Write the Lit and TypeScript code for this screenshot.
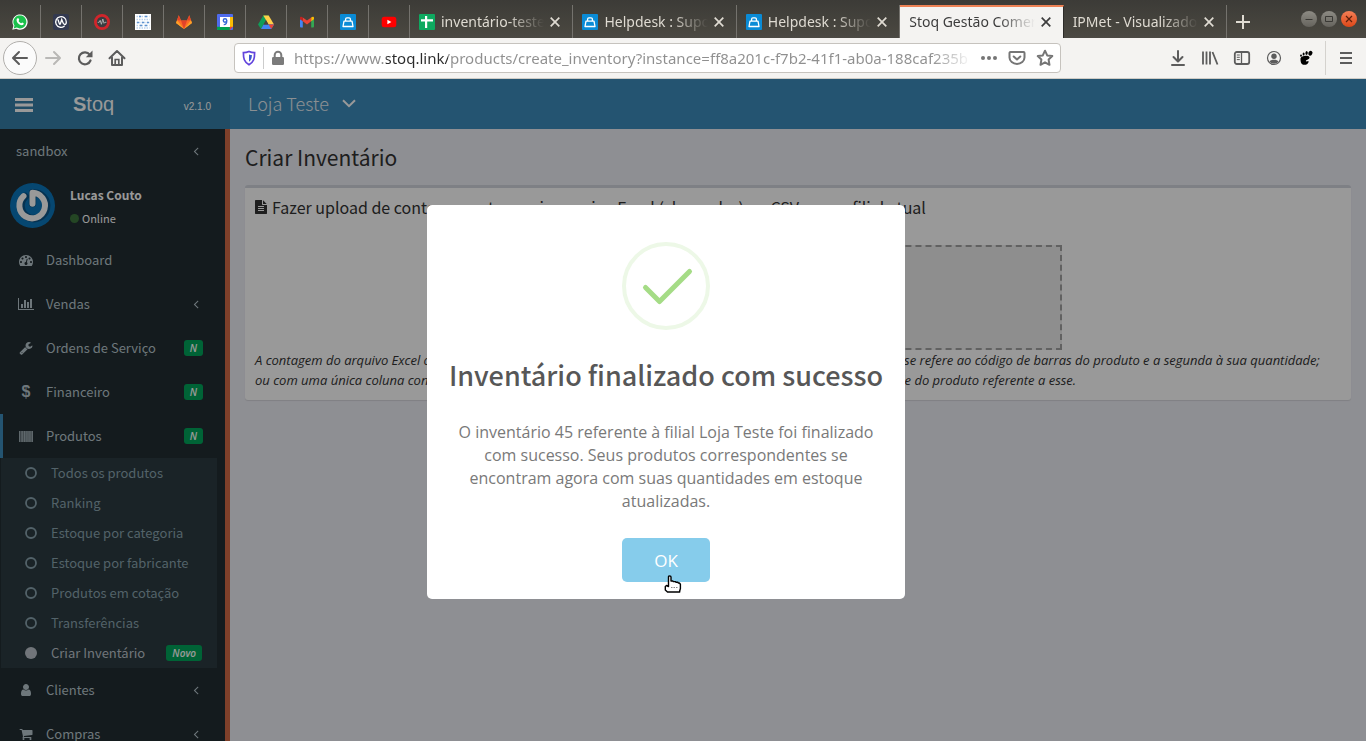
import { LitElement, html, css, svg, nothing } from "lit";
import { customElement } from "lit/decorators.js";
import { classMap } from "lit/directives/class-map.js";

const box = (view: string, w: number, h: number, body: unknown) =>
  html`<svg viewBox=${view} width=${w} height=${h} aria-hidden="true" style="display:block">${body}</svg>`;
const fa = (d: string, w = 14, h = 14, units = 1792) =>
  box(`0 0 ${units} 1792`, w, h, svg`<path fill="currentColor" d=${d} />`);

const FA = {
  angle: "M1203 544q0 13-10 23l-393 393 393 393q10 10 10 23t-10 23l-50 50q-10 10-23 10t-23-10l-466-466q-10-10-10-23t10-23l466-466q10-10 23-10t23 10l50 50q10 10 10 23z",
  user: "M1536 1399q0 109-62.5 187t-150.5 78h-854q-88 0-150.5-78t-62.5-187q0-85 8.5-160.5t31.5-152 58.5-131 94-89 134.5-34.5q131 128 313 128t313-128q76 0 134.5 34.5t94 89 58.5 131 31.5 152 8.5 160.5zm-256-887q0 159-112.5 271.5t-271.5 112.5-271.5-112.5-112.5-271.5 112.5-271.5 271.5-112.5 271.5 112.5 112.5 271.5z",
  cart: "M704 1536q0 52-38 90t-90 38-90-38-38-90 38-90 90-38 90 38 38 90zm896 0q0 52-38 90t-90 38-90-38-38-90 38-90 90-38 90 38 38 90zm128-1088v512q0 24-16.5 42.5t-40.5 21.5l-1044 122q13 60 13 70 0 16-24 64h920q26 0 45 19t19 45-19 45-45 19h-1024q-26 0-45-19t-19-45q0-11 8-31.5t16-36 21.5-40 15.5-29.5l-177-823h-204q-26 0-45-19t-19-45 19-45 45-19h256q16 0 28.5 6.5t19.5 15.5 13 24.5 8 26 5.5 29.5 4.5 26h1201q26 0 45 19t19 45z",
  wrench: "M448 1472q0-26-19-45t-45-19-45 19-19 45 19 45 45 19 45-19 19-45zm644-420l-682 682q-37 37-90 37-52 0-91-37l-106-108q-38-36-38-90 0-53 38-91l681-681q39 98 114.5 173.5t173.5 114.5zm634-435q0 39-23 106-47 134-164.5 217.5t-258.5 83.5q-185 0-316.5-131.5t-131.5-316.5 131.5-316.5 316.5-131.5q58 0 121.5 16.5t107.5 46.5q16 11 16 28t-16 28l-293 169v224l193 107q5-3 79-48.5t135.5-81 70.5-35.5q15 0 23.5 10t8.5 25z",
  dash: "M384 1152q0-53-37.5-90.5t-90.5-37.5-90.5 37.5-37.5 90.5 37.5 90.5 90.5 37.5 90.5-37.5 37.5-90.5zm192-448q0-53-37.5-90.5t-90.5-37.5-90.5 37.5-37.5 90.5 37.5 90.5 90.5 37.5 90.5-37.5 37.5-90.5zm428 481l101-382q6-26-7.5-48.5t-38.5-29.5-48 6.5-30 39.5l-101 382q-60 5-107 43.5t-63 98.5q-20 77 20 146t117 89 146-20 89-117q16-60-6-117t-72-91zm660-33q0-53-37.5-90.5t-90.5-37.5-90.5 37.5-37.5 90.5 37.5 90.5 90.5 37.5 90.5-37.5 37.5-90.5zm-640-640q0-53-37.5-90.5t-90.5-37.5-90.5 37.5-37.5 90.5 37.5 90.5 90.5 37.5 90.5-37.5 37.5-90.5zm448 192q0-53-37.5-90.5t-90.5-37.5-90.5 37.5-37.5 90.5 37.5 90.5 90.5 37.5 90.5-37.5 37.5-90.5zm320 448q0 261-141 483-19 29-54 29h-1402q-35 0-54-29-141-221-141-483 0-182 71-348t191-286 286-191 348-71 348 71 286 191 191 286 71 348z",
  bars: "M640 896v512h-256v-512h256zm384-512v1024h-256v-1024h256zm1024 1152v128h-2048v-1536h128v1408h1920zm-640-896v768h-256v-768h256zm384-384v1152h-256v-1152h256z",
  file: "M1596 476q14 14 28 36h-472v-472q22 14 36 28zm-476 164h544v1056q0 40-28 68t-68 28h-1344q-40 0-68-28t-28-68v-1600q0-40 28-68t68-28h800v544q0 40 28 68t68 28zm160 736v-64q0-14-9-23t-23-9h-704q-14 0-23 9t-9 23v64q0 14 9 23t23 9h704q14 0 23-9t9-23zm0-256v-64q0-14-9-23t-23-9h-704q-14 0-23 9t-9 23v64q0 14 9 23t23 9h704q14 0 23-9t9-23zm0-256v-64q0-14-9-23t-23-9h-704q-14 0-23 9t-9 23v64q0 14 9 23t23 9h704q14 0 23-9t9-23z",
};

const barcode = box("0 0 14 11", 14, 11, svg`<path fill="currentColor" opacity=".45" d="M0 0h14v11h-14z"/><path fill="currentColor" opacity=".7" d="M0 0h1v11h-1zM2 0h.6v11h-.6zM3.200 0h1v11h-1zM5 0h1.400v11h-1.400zM7 0h.7v11h-.7zM8.400 0h1.200v11h-1.200zM10.200 0h.7v11h-.7zM11.400 0h.6v11h-.6zM12.600 0h1.400v11h-1.400z" />`);

const fav = (body: unknown) => box("0 0 16 16", 16, 16, body);
const helpdesk = fav(svg`<rect width="16" height="16" rx="1" fill="#0a8bd6"/><path d="M4 7.200h8l1 5.300H3zM5.600 7V5.200a1.300 1.300 0 0 1 1.300-1.300h2.200a1.300 1.300 0 0 1 1.300 1.300V7" fill="none" stroke="#fff" stroke-width="1.300" stroke-linejoin="round"/>`);

const PINNED: [string, unknown][] = [
  ["WhatsApp", fav(svg`<path d="M.3 15.8l1.100-4A7.600 7.600 0 1 1 4.300 14.700z" fill="#fff"/><path d="M1.700 14.400l.8-2.800A6.500 6.500 0 1 1 4.700 13.600z" fill="#1bc04c"/><path d="M5.600 4.300c.4-.2.8-.1 1 .3l.6 1.200c.1.500-.6 1-.6 1.300.5 1 1.400 1.800 2.400 2.200.4 0 .8-.9 1.200-.8l1.400.7c.4.600-.2 1.600-1 1.900-2.500.6-6.300-2.500-6-5.400.1-.6.500-1.100 1-1.400z" fill="#fff"/>`)],
  ["Workplace", fav(svg`<rect width="16" height="16" rx="2" fill="#333950"/><path d="M11.200 12.200A5.300 5.300 0 1 1 13.300 8c0 1.500-.7 2.500-1.700 2.500S10.200 9.500 9.700 8L8.700 5.500 7.400 9.700Q7 10.800 6.400 9.700L5 5.800" fill="none" stroke="#fff" stroke-width="1.300" stroke-linecap="round"/>`)],
  ["Monitor", fav(svg`<circle cx="8" cy="8" r="6.600" fill="#3a3d40" stroke="#d1252b" stroke-width="2.800"/><path d="M3.700 8.300h1.500l1-2 1.200 4L8.800 5l1.200 4.300.9-1h1.500" fill="none" stroke="#b4b4b4" stroke-width=".9"/>`)],
  ["Relatórios", fav(svg`<rect width="16" height="16" fill="#fff"/><path d="M1.500 2.500h13M1.500 5.500h13M1.500 8.500h13M1.500 11.500h13M1.500 14h13" stroke="#b9d1ec" stroke-width="1.500" stroke-dasharray="1.500 1"/><path d="M4 2.500h2M10 2.500h2M2 8.500h2M7 8.500h2M12 8.500h2M5 11.500h2M10 11.500h2" stroke="#5f93cf" stroke-width="1.500"/>`)],
  ["GitLab", fav(svg`<path d="M8 15L0 9.100 2.700 1.300 5.100 6.500h5.800l2.400-5.200L16 9.100z" fill="#fc6d26"/><path d="M8 15L5 6.500h6z" fill="#e24329"/><path d="M0 9.100l1.100-2.900L8 15zM16 9.100l-1.100-2.900L8 15z" fill="#fca326"/><path d="M1.200 6.300l1.500-5 2.300 5.200zM14.800 6.300l-1.500-5L11 6.500z" fill="#e24329"/>`)],
  ["Agenda", fav(svg`<rect width="16" height="16" rx="1" fill="#4f6bed"/><path d="M12.800 3H16v10h-3.200z" fill="#fbbc04"/><path d="M0 12.800h13V16H1a1 1 0 0 1-1-1z" fill="#00a050"/><path d="M12.800 12.800H16L12.800 16z" fill="#ea4335"/><path d="M3 3h10v10H3z" fill="#fff"/><circle cx="8" cy="6.500" r="1.700" fill="none" stroke="#3367d6" stroke-width="1.400"/><path d="M9.700 6.500c.2 2.600-.8 4.200-3 4.100" fill="none" stroke="#3367d6" stroke-width="1.400"/>`)],
  ["Drive", fav(svg`<path d="M5.300 1.500h5.400L8 6.200 3 15 0 10.500z" fill="#0f9d58"/><path d="M5.300 1.500h5.400L16 10.500h-5.400z" fill="#ffcf48"/><path d="M5.500 10.500H16L13.300 15H3z" fill="#4285f4"/><path d="M10.600 10.500H16L13.300 15z" fill="#ea4335"/><path d="M8 6.300l2.400 4.200H5.600z" fill="#45443f"/>`)],
  ["Gmail", fav(svg`<path d="M1 5l2.800 1.800v6.700H2a1 1 0 0 1-1-1z" fill="#4285f4"/><path d="M15 5l-2.800 1.800v6.700H14a1 1 0 0 0 1-1z" fill="#34a853"/><path d="M3.800 3.400L8 6.600l4.200-3.200v3.900L8 10.500 3.800 7.300z" fill="#ea4335"/><path d="M1 4c0-1.500 1.500-1.500 2.800-.6v3.900L1 5.200z" fill="#c5221f"/><path d="M15 4c0-1.500-1.500-1.500-2.800-.6v3.900L15 5.200z" fill="#fbbc04"/>`)],
  ["Helpdesk", helpdesk],
  ["YouTube", fav(svg`<rect x=".7" y="2.700" width="14.600" height="10.600" rx="2.500" fill="#f00"/><path d="M6.400 5.700L10.400 8l-4 2.300z" fill="#fff"/>`)],
];

const sheets = fav(svg`<rect width="16" height="16" rx="1" fill="#0ea960"/><path d="M6 2h2.200v12H6zM2 5.200h12v2.300H2z" fill="#fff"/>`);
const TABS: { title: string; icon?: unknown; active?: boolean }[] = [
  { title: "inventário-teste.xlsx", icon: sheets },
  { title: "Helpdesk : Suporte", icon: helpdesk },
  { title: "Helpdesk : Suporte", icon: helpdesk },
  { title: "Stoq Gestão Comercial", active: true },
  { title: "IPMet - Visualizador" },
];

const stroke = (d: string, w = 2, size = 18) =>
  box("0 0 18 18", size, size, svg`<path d=${d} fill="none" stroke="currentColor" stroke-width=${w} stroke-linecap="round" stroke-linejoin="round" />`);

@customElement("browser-chrome")
export class BrowserChrome extends LitElement {
  static styles = css`
    :host { display: block; font: 14px/18px "Noto Sans", sans-serif; }
    button { border: 0; padding: 0; margin: 0; background: none; color: inherit; font: inherit; display: flex; align-items: center; justify-content: center; }
    .strip { display: flex; height: 38px; box-sizing: border-box; padding-top: 5px; background: linear-gradient(#3c3b37, #48463f 80%, #4b4943); color: #dfdbd2; }
    .pin { flex: 0 0 41px; box-sizing: border-box; border-right: 1px solid #74726d; }
    .tabs { flex: 1; display: flex; min-width: 0; }
    .tab { flex: 1 1 0; min-width: 0; display: flex; align-items: center; gap: 6px; box-sizing: border-box; padding: 0 12px 0 9px; border-right: 1px solid #74726d; }
    .tab.active { background: #f4f3f1; color: #3d3d3d; border-top: 2px solid #ee8255; border-right-color: #2c2b28; padding-bottom: 2px; }
    .name { flex: 1; min-width: 0; overflow: hidden; white-space: nowrap; mask-image: linear-gradient(90deg, #000 calc(100% - 36px), transparent); }
    .end { flex: 0 0 139px; display: flex; align-items: center; justify-content: space-between; }
    .plus { width: 32px; height: 33px; }
    .window { display: flex; gap: 4px; padding: 0 9px 5px 0; }
    .round { width: 16px; height: 16px; border-radius: 50%; background: linear-gradient(#8d8b84, #65635d); color: #3a3935; }
    .round.close { background: linear-gradient(#f57f56, #dd4718); color: #5d1f0b; }
    .bar { display: flex; align-items: center; height: 41px; box-sizing: border-box; background: #f4f3f1; border-bottom: 1px solid #cfccc6; color: #5c5c5c; padding: 0 14px 0 3px; }
    .back { width: 34px; height: 34px; box-sizing: border-box; border: 1px solid #b1afac; border-radius: 50%; background: #fbfbfb; }
    .nav { display: flex; gap: 14px; margin-left: 7px; }
    .dim { color: #b9b8b6; }
    .address { flex: 1; margin-left: 108px; min-width: 0; height: 30px; box-sizing: border-box; display: flex; align-items: center; background: #fff; border: 1px solid #c6c3be; border-radius: 4px; padding: 0 6px; }
    .shield { border-right: 1px solid #ccc; padding-right: 6px; margin-right: 7px; height: 22px; display: flex; align-items: center; }
    .lock { color: #7b7b7b; margin-right: 9px; }
    .url { flex: 1; min-width: 0; border: 0; outline: 0; padding: 0; height: 24px; font: 15px/24px "Noto Sans", sans-serif; color: transparent; -webkit-background-clip: text; background-clip: text;
      background-image: linear-gradient(90deg, #8f8f8f 92px, #2b2b2b 92px, #2b2b2b 154px, #8f8f8f 154px, #8f8f8f calc(100% - 40px), transparent); }
    .actions { display: flex; align-items: center; gap: 10px; color: #757575; margin-left: 8px; }
    .tools { margin-left: 108px; display: flex; gap: 14px; }
    .menu { border-left: 1px solid #d4d2ce; height: 34px; padding-left: 14px; margin-left: 10px; }
  `;

  render() {
    return html`
      <div class="strip">
        ${PINNED.map(([name, icon]) => html`<button class="pin" aria-label=${name}>${icon}</button>`)}
        <div class="tabs">
          ${TABS.map((t) => html`<div class=${classMap({ tab: true, active: !!t.active })}>
            ${t.icon ?? nothing}<span class="name">${t.title}</span>
            <button aria-label="Fechar aba">${box("0 0 10 10", 10, 10, svg`<path d="M.7.7l8.600 8.600M9.300.7L.7 9.300" stroke="currentColor" stroke-width="1.700"/>`)}</button>
          </div>`)}
        </div>
        <div class="end">
          <button class="plus" aria-label="Nova aba">${box("0 0 14 14", 14, 14, svg`<path d="M7 0v14M0 7h14" stroke="currentColor" stroke-width="2"/>`)}</button>
          <div class="window">
            <button class="round" aria-label="Minimizar">${fav(svg`<path d="M4.500 8.500h7" stroke="currentColor"/>`)}</button>
            <button class="round" aria-label="Maximizar">${fav(svg`<path d="M4.500 5.500h7v5h-7z" fill="none" stroke="currentColor"/>`)}</button>
            <button class="round close" aria-label="Fechar">${fav(svg`<path d="M5 5l6 6M11 5l-6 6" stroke="currentColor" stroke-width="1.200"/>`)}</button>
          </div>
        </div>
      </div>
      <div class="bar">
        <button class="back" aria-label="Voltar">${stroke("M16 9H2.500M8 3L2 9l6 6")}</button>
        <div class="nav">
          <button class="dim" aria-label="Avançar">${stroke("M2 9h13.500M10 3l6 6-6 6")}</button>
          <button aria-label="Recarregar">${box("0 0 18 18", 18, 18, svg`<path d="M14.500 11.500a6 6 0 1 1-.8-5.800" fill="none" stroke="currentColor" stroke-width="2.200" stroke-linecap="round"/><path d="M16.500 1.500v6.700H9.800z" fill="currentColor"/>`)}</button>
          <button aria-label="Início">${box("0 0 18 18", 18, 18, svg`<path d="M1.500 9.200L9 2l7.500 7.200M4 8.500V16h10V8.500" fill="none" stroke="currentColor" stroke-width="2" stroke-linecap="round" stroke-linejoin="round"/><path d="M7.200 16v-5.500h3.600V16" fill="none" stroke="currentColor" stroke-width="1.700"/>`)}</button>
        </div>
        <div class="address">
          <span class="shield">${box("0 0 16 16", 16, 16, svg`<path d="M8 1.500c2 .9 4 1.200 5.600 1.200 0 5.500-.6 9.300-5.600 12C3 12 2.400 8.200 2.400 2.700 4 2.700 6 2.400 8 1.500z" fill="none" stroke="#6244dd" stroke-width="1.700"/><path d="M8 4.400c1 .4 2 .6 2.900.7-.1 3.200-.7 5.200-2.900 6.700z" fill="#3c58cf"/>`)}</span>
          <span class="lock">${box("0 0 14 16", 14, 16, svg`<rect x="1" y="7" width="12" height="8" rx="1.200" fill="currentColor"/><path d="M3.700 7.500V5a3.300 3.300 0 0 1 6.600 0v2.500" fill="none" stroke="currentColor" stroke-width="2"/>`)}</span>
          <input class="url" type="text" aria-label="Endereço" .value=${"https://www.stoq.link/products/create_inventory?instance=ff8a201c-f7b2-41f1-ab0a-188caf235b"} />
          <div class="actions">
            <button aria-label="Ações da página">${box("0 0 18 18", 18, 18, svg`<circle cx="3" cy="9" r="2" fill="currentColor"/><circle cx="9" cy="9" r="2" fill="currentColor"/><circle cx="15" cy="9" r="2" fill="currentColor"/>`)}</button>
            <button aria-label="Salvar no Pocket">${stroke("M2.500 3h13a1 1 0 0 1 1 1v4.500a7.500 6.500 0 0 1-15 0V4a1 1 0 0 1 1-1zM5.700 7.500L9 10.500l3.300-3")}</button>
            <button aria-label="Adicionar aos favoritos">${stroke("M9 1.700l2.200 4.700 5.100.7-3.700 3.500.9 5.200L9 13.300l-4.500 2.500.9-5.200L1.700 7.100l5.100-.7z")}</button>
          </div>
        </div>
        <div class="tools">
          <button aria-label="Downloads">${stroke("M9 2v10M4.500 8L9 12.500 13.500 8M3 16h12")}</button>
          <button aria-label="Biblioteca">${box("0 0 18 18", 18, 18, svg`<path d="M2 2.500v13M5.500 2.500v13M9 2.500v13M11.500 3l5 12.500" stroke="currentColor" stroke-width="1.800"/>`)}</button>
          <button aria-label="Barra lateral">${box("0 0 18 18", 18, 18, svg`<rect x="1.800" y="3" width="14.400" height="12" rx="2" fill="none" stroke="currentColor" stroke-width="1.800"/><path d="M8.500 3v12" stroke="currentColor" stroke-width="1.300"/><path d="M3.800 6h3M3.800 8.300h3M3.800 10.600h3" stroke="currentColor"/>`)}</button>
          <button aria-label="Conta">${box("0 0 18 18", 18, 18, svg`<circle cx="9" cy="9" r="6.500" fill="none" stroke="currentColor" stroke-width="1.200"/><circle cx="9" cy="7.300" r="2.700" fill="currentColor"/><path d="M4.600 12.500c1-2.300 7.800-2.300 8.800 0-2 3-6.800 3-8.800 0z" fill="currentColor"/>`)}</button>
          <button aria-label="GNOME">${box("0 0 18 18", 18, 18, svg`<g fill="#000"><path d="M3.500 9.500C4 6.500 11.500 6 12.500 8.300c.3 2-2.800 2.500-3.500 3.200-.4.800.5 1.200 1.500.7.800-.4 1.200.1 1 1C10.700 16.500 4.500 17 3.800 13c-.2-1.200-.4-2.400-.3-3.500z"/><ellipse cx="13.400" cy="4.200" rx="2" ry="2.500" transform="rotate(25 13.400 4.200)"/><ellipse cx="9.600" cy="4" rx="1.200" ry="1.900" transform="rotate(10 9.600 4)"/><ellipse cx="6.600" cy="5" rx="1" ry="1.500"/><ellipse cx="4" cy="6.600" rx=".9" ry="1.200"/></g>`)}</button>
        </div>
        <button class="menu" aria-label="Menu">${box("0 0 12 14", 12, 14, svg`<path d="M0 2h12M0 7h12M0 12h12" stroke="currentColor" stroke-width="2"/>`)}</button>
      </div>`;
  }
}

interface Item { label: string; icon: unknown; badge?: boolean; arrow?: boolean; children?: string[] }
const MENU: Item[] = [
  { label: "Dashboard", icon: fa(FA.dash) },
  { label: "Vendas", icon: fa(FA.bars, 16, 14, 2048), arrow: true },
  { label: "Ordens de Serviço", icon: fa(FA.wrench), badge: true },
  { label: "Financeiro", icon: html`<b class="dollar">$</b>`, badge: true },
  { label: "Produtos", icon: barcode, badge: true, children: ["Todos os produtos", "Ranking", "Estoque por categoria", "Estoque por fabricante", "Produtos em cotação", "Transferências", "Criar Inventário"] },
  { label: "Clientes", icon: fa(FA.user), arrow: true },
  { label: "Compras", icon: fa(FA.cart), arrow: true },
];

@customElement("side-menu")
export class SideMenu extends LitElement {
  static styles = css`
    :host { display: block; box-sizing: border-box; background: #222d32; border-right: 5px solid #d46b47; color: #b8c7ce; overflow: hidden; font-size: 13px; line-height: 20px; }
    a { color: inherit; text-decoration: none; display: flex; align-items: center; box-sizing: border-box; }
    ul { list-style: none; margin: 0; padding: 0; }
    .top, .entry { height: 44px; padding: 0 22px 0 15px; border-left: 3px solid transparent; }
    .top { border-left-width: 1px; }
    .grow { flex: 1; }
    .user { display: flex; gap: 15px; padding: 10px; height: 65px; box-sizing: border-box; }
    .who { color: #fff; display: flex; flex-direction: column; padding-top: 2px; }
    .who b { font-size: 12px; }
    .status { display: flex; align-items: center; gap: 3px; font-size: 11px; margin-top: 3px; }
    .dot { width: 9px; height: 9px; border-radius: 50%; background: #3c763d; }
    .icon { width: 20px; flex: none; display: flex; justify-content: center; margin: 0 10px 0 -2px; }
    .dollar { font: bold 16px/20px "Liberation Sans", sans-serif; }
    .open { border-left-color: #3c8dbc; }
    .badge { background: #00a65a; color: #fff; border-radius: 3px; font: italic 600 10px/16px "Open Sans", sans-serif; padding: 0 6px; }
    .sub { background: #2c3b41; margin: 0 8px 0 1px; color: #8aa4af; }
    .sub a { height: 30px; padding: 0 15px 0 24px; gap: 14px; }
    .sub .on { color: #bcc4cc; }
  `;

  render() {
    return html`
      <a class="top" href="#"><span class="grow">sandbox</span>${fa(FA.angle)}</a>
      <div class="user">
        ${box("0 0 45 45", 45, 45, svg`<circle cx="22.500" cy="22.500" r="22.500" fill="#0a77bc"/><path d="M15 13.500A12.800 12.800 0 1 0 22.500 10v10.500" fill="none" stroke="#0a5488" stroke-width="7.500" stroke-linecap="round" stroke-linejoin="round"/><path d="M13.500 13.100A12.800 12.800 0 1 0 22.500 9.700v11" fill="none" stroke="#fff" stroke-width="6" stroke-linecap="round" stroke-linejoin="round"/>`)}
        <div class="who"><b>Lucas Couto</b><span class="status"><i class="dot"></i>Online</span></div>
      </div>
      <ul>
        ${MENU.map((m) => html`<li>
          <a class=${classMap({ entry: true, open: !!m.children })} href="#">
            <span class="icon">${m.icon}</span><span class="grow">${m.label}</span>
            ${m.badge ? html`<span class="badge">N</span>` : nothing}
            ${m.arrow ? fa(FA.angle) : nothing}
          </a>
          ${m.children ? html`<ul class="sub">${m.children.map((c, i, all) => {
            const on = i === all.length - 1;
            return html`<li><a class=${classMap({ on })} href="#">
              ${box("0 0 12 12", 12, 12, on ? svg`<circle cx="6" cy="6" r="6" fill="currentColor"/>` : svg`<circle cx="6" cy="6" r="5" fill="none" stroke="currentColor" stroke-width="1.800"/>`)}
              <span class="grow">${c}</span>${on ? html`<span class="badge">Novo</span>` : nothing}</a></li>`;
          })}</ul>` : nothing}
        </li>`)}
      </ul>`;
  }
}

@customElement("success-dialog")
export class SuccessDialog extends LitElement {
  static styles = css`
    :host { display: block; box-sizing: border-box; width: 478px; padding: 37px 17px 17px; background: #fff; border-radius: 5px; text-align: center; }
    .mark { display: block; margin: 0 auto; }
    h2 { margin: 25px 0 26px; font-size: 27px; line-height: 40px; font-weight: 500; color: #575757; white-space: nowrap; }
    p { margin: 0; padding: 0 8px; font: 16px/23px "Open Sans", sans-serif; color: #797979; }
    .ok { position: relative; display: block; margin: 25px auto 0; width: 88px; height: 44px; border: 0; border-radius: 5px; background: #86cceb; color: #fff; font: 17px/24px "Open Sans", sans-serif; padding: 1px 0 0; }
    .cursor { position: absolute; left: 42px; top: 37px; }
  `;

  render() {
    return html`
      <svg class="mark" viewBox="0 0 88 88" width="88" height="88" aria-hidden="true">
        <circle cx="44" cy="44" r="42" fill="none" stroke="#edf8e7" stroke-width="4" />
        <path d="M23.500 45.500L37.500 59.500 67.500 29.500" fill="none" stroke="#a5dc86" stroke-width="5" stroke-linecap="round" stroke-linejoin="round" />
      </svg>
      <h2>Inventário finalizado com sucesso</h2>
      <p>O inventário 45 referente à filial Loja Teste foi finalizado com sucesso. Seus produtos correspondentes se encontram agora com suas quantidades em estoque atualizadas.</p>
      <button class="ok">OK
        <svg class="cursor" viewBox="0 0 18 18" width="18" height="18" aria-hidden="true">
          <path d="M4.500 1.900c0-1.400 2.500-1.400 2.500 0V6h1.800l.5.600h2l.7.700h1.800l.6.700h1l1 1.200v4.300L15.700 16v1H3.500L1.300 15v-3.500l1.200-1 2 1z" fill="#fff" stroke="#000" stroke-width="1.400" stroke-linejoin="round" />
          <path d="M7 12.500h7" stroke="#888" stroke-dasharray="1.500 1" />
        </svg>
      </button>`;
  }
}

@customElement("app-root")
export class AppRoot extends LitElement {
  static styles = css`
    :host { display: flex; flex-direction: column; height: 100vh; overflow: hidden; font: 13px/20px "Noto Sans CJK JP", "Noto Sans", sans-serif; color: #333; }
    .page { position: relative; flex: 1; min-height: 0; display: grid; grid-template: 50px 1fr / 230px 1fr; }
    .brand { background: #367fa9; color: #fff; display: flex; align-items: center; padding: 0 19px 0 15px; font-family: "Liberation Sans", sans-serif; }
    .toggle { border: 0; background: none; padding: 2px 0 0; color: inherit; }
    .logo { flex: 1; margin-left: 40px; font-size: 20px; }
    .version { font-size: 10px; padding-top: 6px; }
    .head { background: #3c8dbc; color: #e6eef4; display: flex; align-items: center; padding: 0 0 2px 18px; }
    .store { border: 0; background: none; padding: 0; color: inherit; font: 300 18px/24px "Noto Sans CJK JP", sans-serif; display: flex; align-items: center; gap: 13px; }
    .main { background: #edeef5; padding: 15px; min-width: 0; }
    h1 { font-size: 21px; line-height: 26px; font-weight: 400; margin: 0 0 15px; }
    .card { background: #fff; border-top: 3px solid #d2d6de; border-radius: 3px; box-shadow: 0 1px 1px rgba(0, 0, 0, 0.1); padding: 10px; }
    h2 { display: flex; align-items: center; gap: 5px; margin: 0 0 29px; font-size: 16px; line-height: 18px; font-weight: 400; }
    .drop { height: 105px; max-width: 528px; box-sizing: border-box; margin: 0 auto; border: 2px dashed #a2a2a2; background: #ededed; }
    .note { margin: 0; font: italic 13px/20px "Open Sans", sans-serif; color: #333; }
    .overlay { position: absolute; inset: 0; background: rgba(0, 0, 0, 0.4); display: grid; place-items: center; padding: 0 34px 16px 0; }
  `;

  render() {
    return html`
      <browser-chrome></browser-chrome>
      <div class="page">
        <div class="brand">
          <button class="toggle" aria-label="Menu">${box("0 0 18 16", 18, 16, svg`<path d="M0 2.500h18M0 8h18M0 13.500h18" stroke="currentColor" stroke-width="3"/>`)}</button>
          <span class="logo"><b>S</b>toq</span><span class="version">v2.1.0</span>
        </div>
        <header class="head">
          <button class="store">Loja Teste ${box("0 0 14 9", 14, 9, svg`<path d="M1 1.200l6 6 6-6" fill="none" stroke="#fff" stroke-width="2"/>`)}</button>
        </header>
        <side-menu></side-menu>
        <main class="main">
          <h1>Criar Inventário</h1>
          <section class="card">
            <h2>${box("128 0 1536 1792", 12, 14, svg`<path fill="currentColor" d=${FA.file} />`)}<span>Fazer upload de contagem externa via arquivo Excel (xls ou xlsx) ou CSV para a filial atual</span></h2>
            <div class="drop"></div>
            <p class="note">A contagem do arquivo Excel ou CSV deve ser feita com duas colunas, sem a linha de cabeçalho, onde a primeira se refere ao código de barras do produto e a segunda à sua quantidade;<br />ou com uma única coluna contendo o código de barras, onde cada repetição na planilha soma mais uma unidade do produto referente a esse.</p>
          </section>
        </main>
        <div class="overlay"><success-dialog role="dialog" aria-label="Inventário finalizado"></success-dialog></div>
      </div>`;
  }
}
